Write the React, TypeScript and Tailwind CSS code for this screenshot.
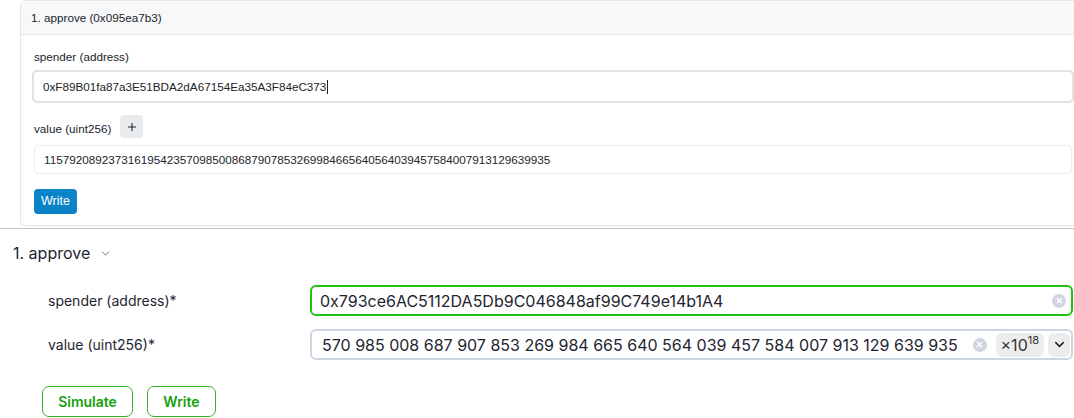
import { ChevronDown, Plus, X } from "lucide-react";

const oldFont = { fontFamily: '"Liberation Sans", Arial, sans-serif' };

function ClearIcon() {
  return (
    <span className="flex h-[14px] w-[14px] shrink-0 items-center justify-center rounded-full bg-[#cfd6e0]">
      <X className="h-[9px] w-[9px] text-white" strokeWidth={3.5} />
    </span>
  );
}

function OldCard() {
  return (
    <div className="h-[228px] pl-[20px] overflow-hidden" style={oldFont}>
      <div className="mr-[-12px] h-[226px] rounded-[5px] border border-[#e4e6ea] text-[#212529]">
        <div className="flex h-[34px] items-center border-b border-[#e4e6ea] bg-[#f7f8fa] px-[10px] text-[11.7px]">
          1. approve (0x095ea7b3)
        </div>
        <div className="px-[13px] pt-[13px]">
          <div className="mb-[4px] text-[11.7px] leading-[18px]">spender (address)</div>
          <div className="flex h-[33px] items-center rounded-[5px] border-2 border-[#e2e2e2] pl-[9px] text-[11.7px] ml-[-2px] mr-[-2px]">
            <span>0xF89B01fa87a3E51BDA2dA67154Ea35A3F84eC373</span>
            <span className="ml-[1px] inline-block h-[14px] w-px bg-[#222]" />
          </div>
          <div className="mt-[12px] flex h-[23px] items-center gap-[9px] text-[11.7px]">
            <span className="pt-[4px]">value (uint256)</span>
            <span className="flex h-[23px] w-[23px] items-center justify-center rounded-[4px] bg-[#e9ecef]">
              <Plus className="h-[12px] w-[12px]" strokeWidth={2.2} />
            </span>
          </div>
          <div className="mt-[7px] flex h-[29px] items-center rounded-[5px] border border-[#ececec] pl-[9px] text-[11.7px]">
            115792089237316195423570985008687907853269984665640564039457584007913129639935
          </div>
          <button className="mt-[15px] flex h-[25px] items-center rounded-[4px] bg-[#0b83c7] px-[7px] text-[12.5px] text-white">
            Write
          </button>
        </div>
      </div>
    </div>
  );
}

function NewForm() {
  return (
    <div className="border-t border-[#c7c7c7] pt-[12px] text-[#1e2530]" style={{ fontFamily: "Inter, sans-serif" }}>
      <div className="flex items-center gap-[9px] pl-[13px] text-[16px] leading-[24px]">
        <span>1. approve</span>
        <ChevronDown className="h-[13px] w-[13px] text-[#6b7280]" strokeWidth={1.8} />
      </div>
      <div className="mt-[20px] flex flex-col gap-[13px] pl-[48px] pr-[1px]">
        <div className="flex items-center">
          <div className="w-[262px] text-[14px]">spender (address)*</div>
          <div className="flex h-[31px] flex-1 items-center rounded-[6px] border-2 border-[#22c012] pl-[8px] pr-[5px] text-[16px]">
            <span className="flex-1">0x793ce6AC5112DA5Db9C046848af99C749e14b1A4</span>
            <ClearIcon />
          </div>
        </div>
        <div className="flex items-center">
          <div className="w-[262px] text-[14px]">value (uint256)*</div>
          <div className="flex h-[31px] flex-1 items-center rounded-[6px] border-2 border-[#cdd5e0] pl-[10px] pr-[1px] text-[16px]">
            <span className="flex-1 whitespace-nowrap">570 985 008 687 907 853 269 984 665 640 564 039 457 584 007 913 129 639 935</span>
            <ClearIcon />
            <span className="ml-[9px] flex h-[24px] items-center rounded-[6px] bg-[#ececec] px-[5px] text-[16px] text-[#333]">
              ×10<sup className="text-[11px] top-[-5px]">18</sup>
            </span>
            <span className="ml-[4px] flex h-[24px] w-[22px] items-center justify-center rounded-[6px] bg-[#ececec]">
              <ChevronDown className="h-[15px] w-[15px] text-[#222]" strokeWidth={2.4} />
            </span>
          </div>
        </div>
      </div>
      <div className="mt-[26px] flex gap-[14px] pl-[42px]">
        <button className="h-[31px] w-[91px] rounded-[7px] border border-[#31b323] text-[14px] font-semibold text-[#17a10d]">
          Simulate
        </button>
        <button className="h-[31px] w-[69px] rounded-[7px] border border-[#31b323] text-[14px] font-semibold text-[#17a10d]">
          Write
        </button>
      </div>
    </div>
  );
}

export default function App() {
  return (
    <div className="h-[418px] w-full overflow-hidden bg-white">
      <OldCard />
      <NewForm />
    </div>
  );
}
